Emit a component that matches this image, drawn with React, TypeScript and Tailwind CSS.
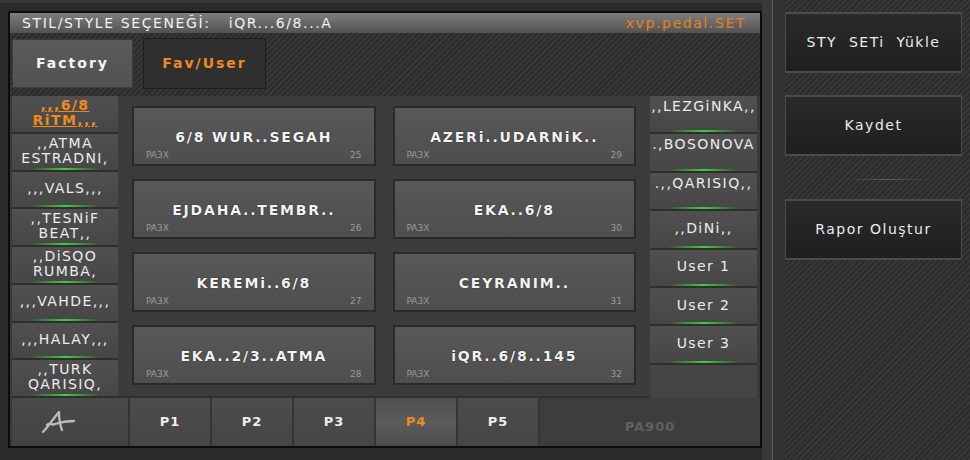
import React from "react";
import clsx from "clsx";

type Category = { lines: string[]; active?: boolean; top?: boolean };
type StyleSlot = { name: string; bank: string; slot: number };

const leftCategories: Category[] = [
  { lines: [",,,6/8", "RiTM,,,"], active: true },
  { lines: [",,ATMA", "ESTRADNI,"] },
  { lines: [",,,VALS,,,"] },
  { lines: [",,TESNiF", "BEAT,,"] },
  { lines: [",,DiSQO", "RUMBA,"] },
  { lines: [",,,VAHDE,,,"] },
  { lines: [",,,HALAY,,,"] },
  { lines: [",,TURK", "QARISIQ,"] },
];

const rightCategories: Category[] = [
  { lines: [",,LEZGiNKA,,"], top: true },
  { lines: [".,BOSONOVA"], top: true },
  { lines: [".,,QARISIQ,,"], top: true },
  { lines: [",,DiNi,,"] },
  { lines: ["User 1"] },
  { lines: ["User 2"] },
  { lines: ["User 3"] },
];

// column-first order: 25..28 on the left, 29..32 on the right
const styles: StyleSlot[] = [
  { name: "6/8 WUR..SEGAH", bank: "PA3X", slot: 25 },
  { name: "EJDAHA..TEMBR..", bank: "PA3X", slot: 26 },
  { name: "KEREMi..6/8", bank: "PA3X", slot: 27 },
  { name: "EKA..2/3..ATMA", bank: "PA3X", slot: 28 },
  { name: "AZERi..UDARNiK..", bank: "PA3X", slot: 29 },
  { name: "EKA..6/8", bank: "PA3X", slot: 30 },
  { name: "CEYRANIM..", bank: "PA3X", slot: 31 },
  { name: "iQR..6/8..145", bank: "PA3X", slot: 32 },
];

const pages = ["P1", "P2", "P3", "P4", "P5"];
const activePage = "P4";

const stripes =
  "bg-[image:repeating-linear-gradient(135deg,#2c2c2c_0px,#2c2c2c_2px,#373737_2px,#373737_4px)]";

function GreenGlow() {
  return (
    <div className="mx-auto h-[2px] w-[66%] bg-linear-to-r from-transparent via-[#3bd03b] to-transparent" />
  );
}

function CategoryCell({ cat, className }: { cat: Category; className?: string }) {
  return (
    <div
      className={clsx(
        "flex flex-col border-b-2 border-[#2e2e2e] bg-linear-to-b from-[#505050] to-[#464646]",
        className
      )}
    >
      <div
        className={clsx(
          "flex flex-1 flex-col items-center text-[14px] leading-[15px] tracking-[1.4px]",
          cat.top ? "justify-start pt-[3px]" : "justify-center",
          cat.active
            ? "font-bold text-[#f08a1c] underline decoration-[#f08a1c] underline-offset-[1px]"
            : "text-[#ececec]"
        )}
      >
        {cat.lines.map((l) => (
          <span key={l} className="whitespace-nowrap">
            {l}
          </span>
        ))}
      </div>
      {cat.active ? <div className="h-[2px]" /> : <GreenGlow />}
    </div>
  );
}

function StyleCard({ item }: { item: StyleSlot }) {
  return (
    <div className="flex h-[60px] flex-col justify-between border-2 border-[#2a2a2a] bg-linear-to-b from-[#585858] to-[#4e4e4e] px-[12px] pb-[3px] pt-[19px]">
      <div className="text-center text-[14px] font-bold tracking-[1.8px] text-[#f4f4f4] [text-shadow:0_0_1px_#000]">
        {item.name}
      </div>
      <div className="flex items-end justify-between text-[9px] leading-[11px] text-[#9a9a9a]">
        <span>{item.bank}</span>
        <span>{item.slot}</span>
      </div>
    </div>
  );
}

function ScriptA() {
  return (
    <svg width="36" height="26" viewBox="0 0 36 26" fill="none" stroke="#bdbdbd" strokeWidth="2.3" strokeLinecap="round" strokeLinejoin="round">
      <path d="M3 23 C8 18 13 10 19 3 C19 10 20 16 22 21" />
      <path d="M7 16 C10 13 12 17 15 15 C21 13 28 12 34 12" />
    </svg>
  );
}

function SideButton({ label }: { label: string }) {
  return (
    <button className="flex h-[61px] w-full items-center justify-center border-y-2 border-x border-[#4b4b4b] bg-linear-to-b from-[#2a2a2a] to-[#1f1f1f] text-[14px] tracking-[1.5px] text-[#ececec] whitespace-pre">
      {label}
    </button>
  );
}

export default function App() {
  return (
    <div className="flex h-[460px] w-[970px] overflow-hidden bg-[#2a2a2a] font-['DejaVu_Sans',Verdana,sans-serif]">
      {/* main style-select window */}
      <div className="w-[762px] border-t-[3px] border-[#383838] pl-[8px] pt-[8px]">
        <div className="flex h-[437px] w-[754px] flex-col border-2 border-[#0c0c0c] bg-[#3a3a3a]">
          <div className="flex h-[20px] items-center justify-between bg-linear-to-b from-[#7e7e7e] to-[#525252] pl-[12px] pr-[14px] text-[14px] tracking-[1.6px]">
            <span className="whitespace-pre text-[#f2f2f2]">STIL/STYLE SEÇENEĞİ:   iQR...6/8...A</span>
            <span className="text-[#e8801a]">xvp.pedal.SET</span>
          </div>

          <div className={clsx("flex h-[63px] items-start gap-[10px] pl-[2px] pt-[5px]", stripes)}>
            <button className="mt-[1px] h-[49px] w-[121px] border border-[#3c3c3c] bg-linear-to-b from-[#5a5a5a] to-[#525252] text-[14px] font-bold tracking-[2px] text-[#f4f4f4]">
              Factory
            </button>
            <button className="h-[51px] w-[123px] border border-[#1e1e1e] bg-[#2f2f2f] text-[14px] font-bold tracking-[2px] text-[#f08a1c]">
              Fav/User
            </button>
          </div>

          <div className="flex h-[302px] pl-[2px] pr-[3px]">
            <div className="flex w-[106px] flex-col">
              {leftCategories.map((c) => (
                <CategoryCell key={c.lines.join(" ")} cat={c} className="flex-1" />
              ))}
            </div>

            <div className="grid w-[532px] grid-flow-col grid-cols-2 grid-rows-4 gap-x-[17px] gap-y-[13px] border-b-2 border-[#313131] bg-[#3c3c3c] px-[14px] pb-[11px] pt-[10px]">
              {styles.map((s) => (
                <StyleCard key={s.slot} item={s} />
              ))}
            </div>

            <div className="flex w-[107px] flex-col bg-[#454545]">
              {rightCategories.map((c) => (
                <CategoryCell key={c.lines.join(" ")} cat={c} className="h-[38.4px]" />
              ))}
            </div>
          </div>

          <div className="flex h-[48px] pl-[2px]">
            <div className="flex w-[118px] items-center border-r-2 border-[#333] bg-linear-to-b from-[#4a4a4a] to-[#424242] pl-[28px]">
              <ScriptA />
            </div>
            {pages.map((p) => (
              <div
                key={p}
                className={clsx(
                  "flex w-[82px] items-center justify-center border-r-2 border-[#353535] text-[13px] font-bold tracking-[1px]",
                  p === activePage
                    ? "bg-linear-to-b from-[#4e4e4e] via-[#5c5c5c] to-[#4c4c4c] text-[#f08a1c]"
                    : "bg-linear-to-b from-[#4c4c4c] to-[#464646] text-[#eeeeee]"
                )}
              >
                {p}
              </div>
            ))}
            <div className="flex flex-1 items-center justify-center bg-[#3d3d3d] pt-[10px] text-[13px] font-bold tracking-[1px] text-[#606060]">
              PA900
            </div>
          </div>
        </div>
      </div>

      <div className="w-[10px] bg-[#393939]" />
      <div className="w-px bg-[#5e5e5e]" />

      {/* action buttons */}
      <div className="flex w-[12px] bg-[#323232]" />
      <div className={clsx("flex flex-1 flex-col pr-[8px] pt-[12px]", stripes)}>
        <SideButton label="STY  SETi  Yükle" />
        <div className="mt-[22px]">
          <SideButton label="Kaydet" />
        </div>
        <div className="ml-[55px] mt-[23px] h-px w-[93px] bg-linear-to-r from-transparent via-[#5c5c5c] to-transparent" />
        <div className="mt-[19px]">
          <SideButton label="Rapor Oluştur" />
        </div>
      </div>
    </div>
  );
}
